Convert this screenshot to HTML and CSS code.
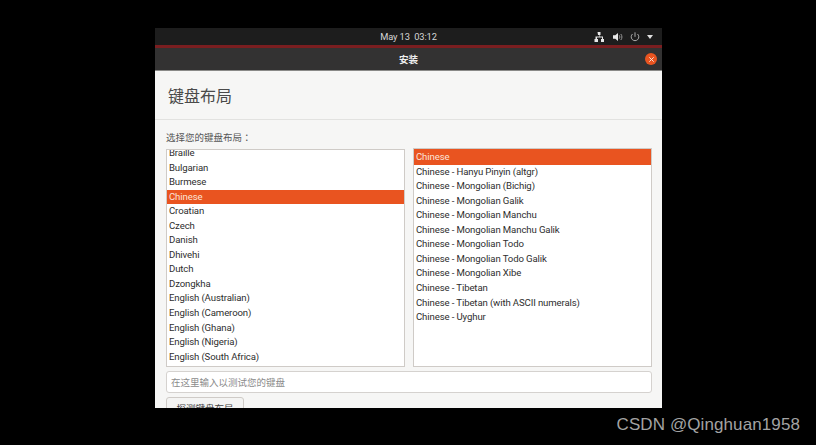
FILE: index.html
```html
<!DOCTYPE html>
<html lang="zh-CN">
<head>
  <meta charset="UTF-8">
  <title>安装</title>
  <link rel="stylesheet" href="styles.css">
</head>
<body>
  <div class="screen">
    <div class="topbar">
      <div class="clock">May 13&nbsp; 03:12</div>
      <div class="tray">
        <svg class="tray-icon net" viewBox="0 0 10 10"><path d="M3.500 0h3v3h-1v1.500h3.500v2.500h1v3h-3v-3h1v-1.500h-5v1.500h1v3h-3.500v-3h1v-2.500h3.500v-1.500h-1z" fill="#e8e8e8"/></svg>
        <svg class="tray-icon" viewBox="0 0 10 10"><path d="M0 3.300h2.300l2.700-2.300v8l-2.700-2.300h-2.300z" fill="#e8e8e8"/><path d="M6.200 3.300c0.800 1 0.800 2.400 0 3.400M7.800 2c1.500 1.800 1.500 4.200 0 6" fill="none" stroke="#999" stroke-width="1"/></svg>
        <svg class="tray-icon" viewBox="0 0 10 10"><path d="M2.500 2a3.800 3.800 0 1 0 5 0" fill="none" stroke="#bbb" stroke-width="0.900"/><path d="M5 0.300v4.500" stroke="#bbb" stroke-width="0.900"/></svg>
        <div class="caret"></div>
      </div>
    </div>
    <div class="accent"></div>
    <div class="titlebar">
      <span class="title">安装</span>
      <div class="close">
        <svg viewBox="0 0 8 8"><path d="M1.500 1.500l5 5M6.500 1.500l-5 5" stroke="#f6e6de" stroke-width="1.100"/></svg>
      </div>
    </div>
    <div class="content">
      <div class="heading">键盘布局</div>
      <div class="body">
        <div class="prompt">选择您的键盘布局<span lang="ja">：</span></div>
        <div class="lists">
          <div class="list list-left">
            <div class="row row-cut">Braille</div>
            <div class="row">Bulgarian</div>
            <div class="row">Burmese</div>
            <div class="row selected">Chinese</div>
            <div class="row">Croatian</div>
            <div class="row">Czech</div>
            <div class="row">Danish</div>
            <div class="row">Dhivehi</div>
            <div class="row">Dutch</div>
            <div class="row">Dzongkha</div>
            <div class="row">English (Australian)</div>
            <div class="row">English (Cameroon)</div>
            <div class="row">English (Ghana)</div>
            <div class="row">English (Nigeria)</div>
            <div class="row">English (South Africa)</div>
            <div class="row">English (UK)</div>
          </div>
          <div class="list list-right">
            <div class="row selected">Chinese</div>
            <div class="row">Chinese - Hanyu Pinyin (altgr)</div>
            <div class="row">Chinese - Mongolian (Bichig)</div>
            <div class="row">Chinese - Mongolian Galik</div>
            <div class="row">Chinese - Mongolian Manchu</div>
            <div class="row">Chinese - Mongolian Manchu Galik</div>
            <div class="row">Chinese - Mongolian Todo</div>
            <div class="row">Chinese - Mongolian Todo Galik</div>
            <div class="row">Chinese - Mongolian Xibe</div>
            <div class="row">Chinese - Tibetan</div>
            <div class="row">Chinese - Tibetan (with ASCII numerals)</div>
            <div class="row">Chinese - Uyghur</div>
          </div>
        </div>
        <input class="test-input" type="text" placeholder="在这里输入以测试您的键盘">
        <button class="detect" type="button">探测键盘布局</button>
      </div>
    </div>
  </div>
  <div class="watermark">CSDN @Qinghuan1958</div>
</body>
</html>
```

FILE: styles.css
```css
:root {
  --orange: #e95420;
  --list-border: #cfcbc7;
  --text: #3d3d3d;
}

html, body {
  height: 100%;
}

body {
  margin: 0;
  padding: 28px 0 0 155px;
  box-sizing: border-box;
  background: #000;
  overflow: hidden;
  font-family: Roboto, "Noto Sans CJK JP", sans-serif;
  font-size: 9.6px;
  color: var(--text);
}

.screen {
  width: 507px;
  height: 380px;
  display: flex;
  flex-direction: column;
  overflow: hidden;
  background: #f6f6f5;
}

.topbar {
  height: 17px;
  flex: none;
  display: flex;
  align-items: center;
  justify-content: center;
  position: relative;
  background: #1d1d1d;
}

.clock {
  color: #d6d6d6;
  font-size: 9.3px;
  letter-spacing: -0.1px;
}

.tray {
  position: absolute;
  right: 9px;
  top: 4px;
  display: flex;
  align-items: center;
  gap: 7px;
}

.tray-icon {
  width: 10px;
  height: 10px;
  display: block;
}

.tray-icon.net {
  margin-right: 2px;
}

.caret {
  width: 0;
  height: 0;
  border-left: 3px solid transparent;
  border-right: 3px solid transparent;
  border-top: 4px solid #e0e0e0;
}

.accent {
  height: 3px;
  flex: none;
  background: #7a1e20;
}

.titlebar {
  height: 23px;
  flex: none;
  display: flex;
  align-items: center;
  justify-content: center;
  position: relative;
  background: #333232;
  border-bottom: 1px solid #8a8a88;
  box-sizing: border-box;
}

.title {
  color: #eeeeee;
  font-weight: bold;
  font-size: 9.5px;
}

.close {
  position: absolute;
  right: 5px;
  top: 5px;
  width: 12px;
  height: 12px;
  border-radius: 50%;
  background: var(--orange);
  display: flex;
  align-items: center;
  justify-content: center;
}

.close svg {
  width: 7px;
  height: 7px;
}

.heading {
  height: 49px;
  box-sizing: border-box;
  padding: 12px 0 0 13px;
  border-bottom: 1px solid #e2e2e0;
  font-size: 16px;
  line-height: 28px;
  color: #4a4a4a;
}

.body {
  padding: 11px 10px 0 11px;
}

.prompt {
  font-size: 9.5px;
  line-height: 13px;
  margin-bottom: 5px;
  color: #555;
}

.lists {
  display: flex;
  gap: 8px;
}

.list {
  width: 239px;
  height: 218px;
  box-sizing: border-box;
  background: #fff;
  border: 1px solid var(--list-border);
  overflow: hidden;
}

.list-right {
  margin-top: -1px;
  height: 219px;
}

.list-right .selected {
  height: 15.6px;
  line-height: 15.6px;
}

.row {
  height: 14.55px;
  line-height: 14.55px;
  padding-left: 2px;
  white-space: nowrap;
  letter-spacing: -0.12px;
  color: #2e2e2e;
}

.row-cut {
  margin-top: -4px;
}

.row.selected {
  background: var(--orange);
  color: #fbe3d8;
}

.test-input {
  display: block;
  width: 100%;
  height: 22px;
  box-sizing: border-box;
  margin-top: 4px;
  padding: 0 4px;
  border: 1px solid #d5d2cf;
  border-radius: 3px;
  background: #fff;
  font: inherit;
  font-size: 9.5px;
  outline: none;
}

.test-input::placeholder {
  color: #8b8b8b;
}

.detect {
  display: block;
  width: 78px;
  height: 22px;
  margin-top: 4px;
  padding: 0;
  border: 1px solid #cfcbc7;
  border-radius: 3px;
  background: #f4f4f3;
  font: inherit;
  font-size: 9.5px;
  color: #444;
}

.watermark {
  position: absolute;
  right: 16px;
  bottom: 10px;
  color: #a3a3a3;
  font-family: "Liberation Sans", sans-serif;
  font-size: 17px;
  letter-spacing: 0.1px;
}
```
